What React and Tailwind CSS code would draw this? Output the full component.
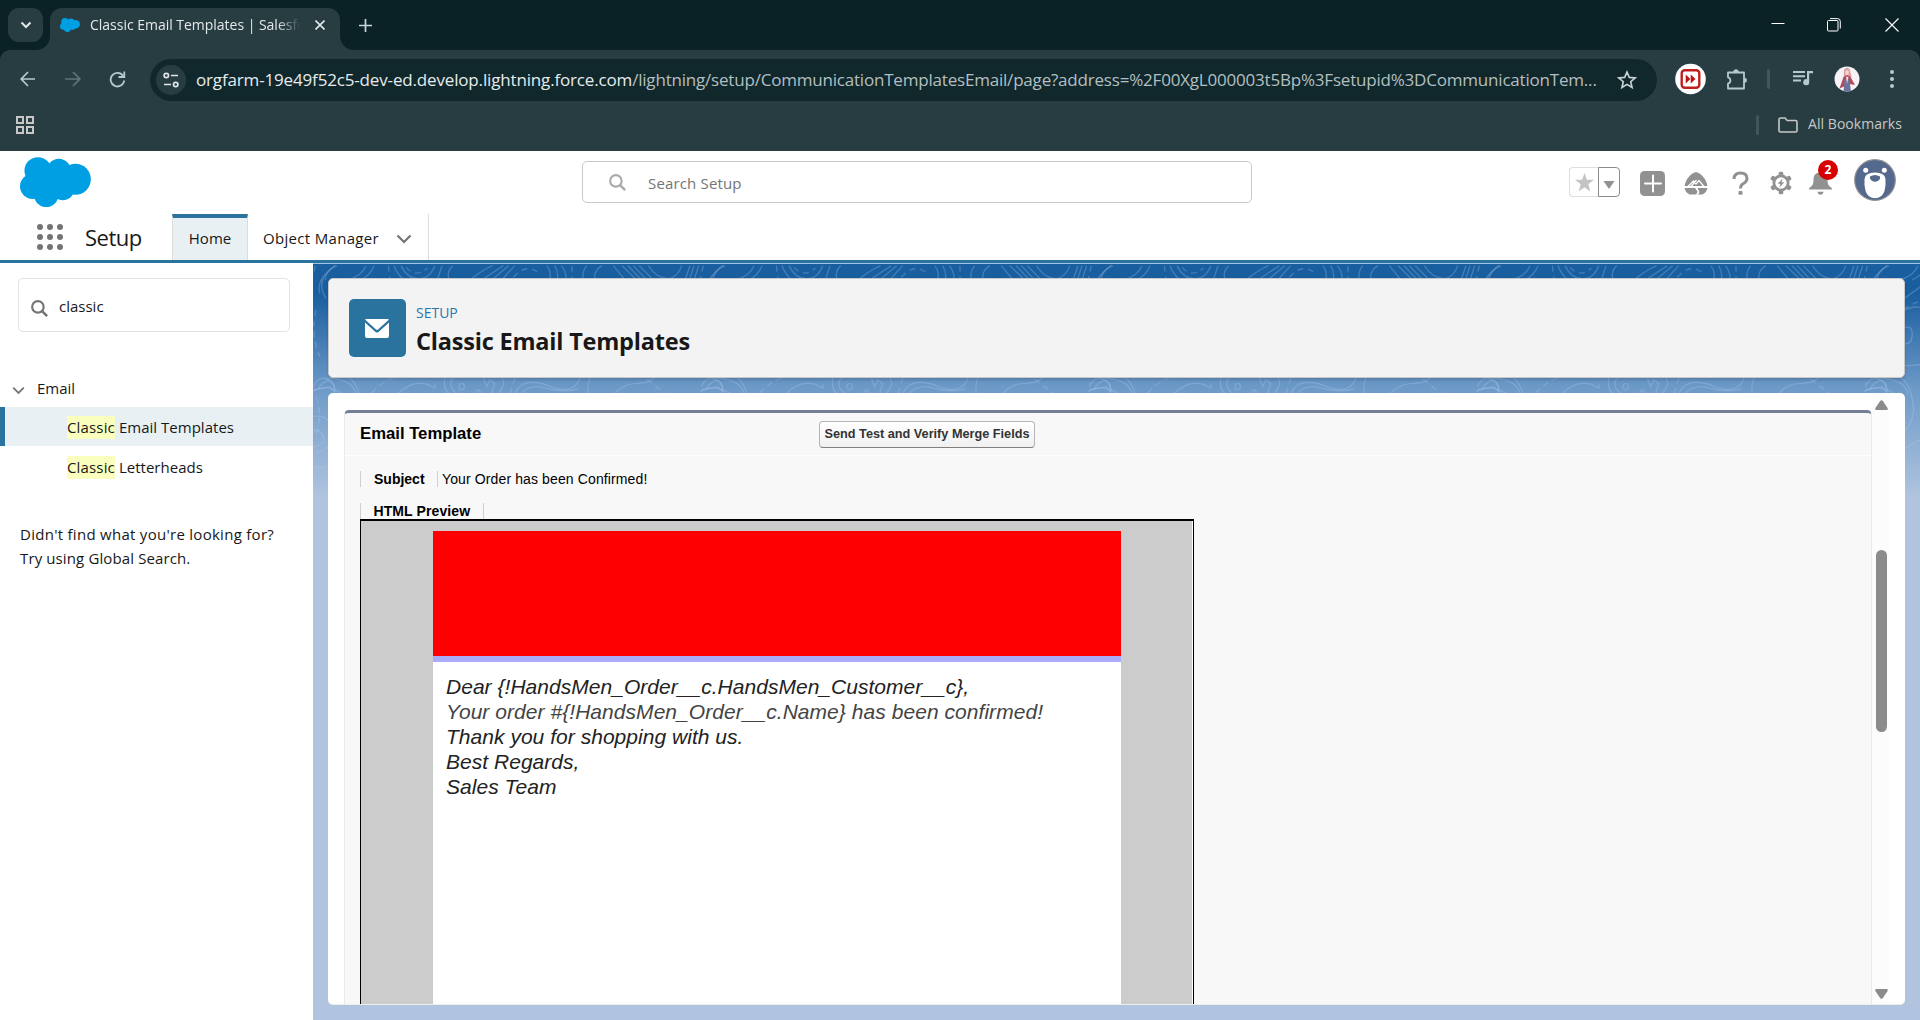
import React from "react";

const ui = "font-['Open_Sans','Noto_Sans',sans-serif]";
const arial = "font-['Liberation_Sans',Arial,sans-serif]";

function Cloud({ className }) {
  return (
    <svg viewBox="60 36 214 150" className={className} fill="#009fe3" preserveAspectRatio="none">
      <circle cx="114" cy="77" r="40.500" />
      <circle cx="177" cy="77" r="36" />
      <circle cx="227" cy="103" r="46.500" />
      <circle cx="98" cy="124" r="38" />
      <circle cx="139" cy="149" r="37" />
      <circle cx="189" cy="130" r="35.500" />
      <path d="M90 70L215 70L220 140L100 150Z" />
    </svg>
  );
}

function Chevron({ className, width = 2.2 }) {
  return (
    <svg viewBox="0 0 16 10" className={className} fill="none" stroke="currentColor" strokeWidth={width}>
      <path d="M1.500 1.500L8 8L14.500 1.500" />
    </svg>
  );
}

function Magnifier({ className }) {
  return (
    <svg viewBox="0 0 16 16" className={className} fill="none" stroke="currentColor" strokeWidth="2">
      <circle cx="6.500" cy="6.500" r="5.400" />
      <path d="M10.400 10.400L15.200 15.200" strokeWidth="2.400" />
    </svg>
  );
}

function TitleBar() {
  return (
    <div className="flex h-[50px] items-stretch bg-[#0a2226] text-[#e3e8e9]">
      <div className="ml-2 mt-2 flex h-[34px] w-[35px] items-center justify-center rounded-[11px] bg-[#283d42]">
        <svg viewBox="0 0 12 8" className="h-2 w-3" fill="none" stroke="currentColor" strokeWidth="2">
          <path d="M1.500 1.500L6 6L10.500 1.500" />
        </svg>
      </div>
      <div className="relative ml-[7px] mt-[7.500px] flex w-[290px] items-center rounded-t-[12px] bg-[#283d42] pb-[7px]">
        <svg className="absolute -left-[14px] bottom-0 h-[14px] w-[14px]" viewBox="0 0 14 14"><path d="M14 0V14H0A14 14 0 0 0 14 0Z" fill="#283d42" /></svg>
        <svg className="absolute -right-[14px] bottom-0 h-[14px] w-[14px]" viewBox="0 0 14 14"><path d="M0 0V14H14A14 14 0 0 1 0 0Z" fill="#283d42" /></svg>
        <Cloud className="ml-[10px] h-[14px] w-5 shrink-0" />
        <div className={`ml-[10px] w-[210px] overflow-hidden whitespace-nowrap text-[14px] leading-5 tracking-[-0.020px] mask-[linear-gradient(to_right,#000_188px,transparent_210px)] ${ui}`}>
          Classic Email Templates | Salesfo
        </div>
        <svg viewBox="0 0 10 10" className="ml-[15px] h-[10px] w-[10px] shrink-0" stroke="currentColor" strokeWidth="1.600"><path d="M0.500 0.500L9.500 9.500M9.500 0.500L0.500 9.500" /></svg>
      </div>
      <svg viewBox="0 0 13 13" className="ml-[19px] mt-[19px] h-[13px] w-[13px]" stroke="#c8d6da" strokeWidth="1.700"><path d="M6.500 0V13M0 6.500H13" /></svg>
      <div className="ml-auto mr-[21px] flex items-center text-white">
        <svg viewBox="0 0 14 14" className="h-[14px] w-[14px]" stroke="currentColor"><path d="M0.500 5.500H13.500" /></svg>
        <svg viewBox="0 0 14 14" className="ml-[42px] h-[14px] w-[14px]" fill="none" stroke="currentColor"><rect x="0.500" y="2.500" width="10.500" height="10.500" rx="1" /><path d="M3 0.600H10.500Q13.300 0.600 13.300 3.400V10.500" /></svg>
        <svg viewBox="0 0 14 14" className="ml-[44px] h-[14px] w-[14px]" stroke="currentColor" strokeWidth="1.100"><path d="M0.500 0.500L13.500 13.500M13.500 0.500L0.500 13.500" /></svg>
      </div>
    </div>
  );
}

function Toolbar() {
  return (
    <div className="bg-[#0a2226]">
      <div className="h-[101px] rounded-t-[10px] bg-[#283d42]">
        <div className="flex h-[58px] items-center text-[#b5cad0]">
          <svg viewBox="0 0 16 16" className="ml-5 h-4 w-4" fill="none" stroke="currentColor" strokeWidth="1.700"><path d="M15 8H1.500M8 1L1.200 8L8 15" /></svg>
          <svg viewBox="0 0 16 16" className="ml-[29px] h-4 w-4 text-[#617479]" fill="none" stroke="currentColor" strokeWidth="1.700"><path d="M0 8H14.500M8 1L14.800 8L8 15" /></svg>
          <svg viewBox="0 0 17 17" className="ml-[28px] h-[17px] w-[17px]" fill="none" stroke="currentColor" strokeWidth="1.800"><path d="M14 4.700A6.800 6.800 0 1 0 15.200 9.500M15.300 0.500V6H9.500" /></svg>
          <div className="ml-6 mt-px flex h-[42px] w-[1507px] items-center rounded-full bg-[#10282c]">
            <div className="ml-[6px] flex h-[30px] w-[30px] items-center justify-center rounded-full bg-[#283d42]">
              <svg viewBox="0 0 16 16" className="h-4 w-4" fill="none" stroke="#dfe6e8" strokeWidth="1.700"><circle cx="3.300" cy="3.500" r="2.200" /><path d="M8 3.500H15M1 12.500H8" /><circle cx="12.700" cy="12.500" r="2.200" /></svg>
            </div>
            <div className={`ml-[10px] w-[1412px] whitespace-nowrap text-[17px] leading-6 text-[#b3bfc1] ${ui}`}>
              <span className="tracking-[-0.160px] text-[#e6ebec]">orgfarm-19e49f52c5-dev-ed.develop.lightning.force.com</span>
              <span className="tracking-[-0.200px]">/lightning/setup/CommunicationTemplatesEmail/page?address=%2F00XgL000003t5Bp%3Fsetupid%3DCommunicationTem...</span>
            </div>
            <svg viewBox="0 0 20 20" className="ml-[9px] h-5 w-5" fill="none" stroke="#c9d3d5" strokeWidth="1.600"><path d="M10 2L12.300 7.400L18.200 7.900L13.700 11.700L15.100 17.500L10 14.400L4.900 17.500L6.300 11.700L1.800 7.900L7.700 7.400Z" /></svg>
          </div>
          <svg viewBox="0 0 32 32" className="ml-[18px] h-8 w-8">
            <circle cx="15.500" cy="16" r="15.300" fill="#fff" />
            <rect x="6.700" y="7.200" width="17.600" height="17.600" rx="3" fill="#fff" stroke="#c11f1f" strokeWidth="2.400" />
            <path d="M10.700 11.500L15.300 16L10.700 20.500ZM15.700 11.500L20.500 16L15.700 20.500Z" fill="#b91515" />
          </svg>
          <svg viewBox="0 0 21 21" className="ml-[19px] h-[21px] w-[21px]" fill="none" stroke="#b5cad0" strokeWidth="1.800">
            <path d="M2 3.500H18V19.500H2V14.500A3.200 3.200 0 0 0 2 8.300Z" strokeLinejoin="round" />
            <path d="M7.500 3A2.500 2.500 0 0 1 12.500 3ZM18.500 9A2.300 2.300 0 0 1 18.500 13.600Z" fill="#b5cad0" strokeWidth="0.500" />
          </svg>
          <div className="ml-5 h-5 w-[3px] rounded bg-[#40565c]" />
          <svg viewBox="0 0 20 16" className="mb-[2px] ml-[23px] h-4 w-5" fill="currentColor"><path d="M0 1H12V3H0ZM0 5.300H12V7.300H0ZM0 9.600H8V11.600H0ZM14 1H20V3.200H16.200V12A3 3 0 1 1 14 9.300Z" /></svg>
          <svg viewBox="0 0 26 26" className="ml-[21px] h-[26px] w-[26px]">
            <defs><clipPath id="profile"><circle cx="13" cy="13" r="12.500" /></clipPath></defs>
            <g clipPath="url(#profile)">
              <rect width="26" height="26" fill="#f5f3f5" />
              <path d="M10 4Q12.500 0 15.500 3L17.500 10L16 17H9.500Z" fill="#dba0a6" />
              <path d="M11.500 5Q13 3.500 14.700 5V8Q13 10 11.500 8Z" fill="#f7d9d2" />
              <path d="M9.500 11L13 9L16.500 11L21 19L15.500 18L5.500 22.500Z" fill="#b04a5c" />
              <path d="M10.500 14L13 12L15.500 14L17 26H9.500Z" fill="#6b739b" />
              <path d="M12 10.500L14.500 11L13 18Z" fill="#efd9dc" />
            </g>
          </svg>
          <svg viewBox="0 0 4 18" className="ml-[30px] h-[18px] w-1" fill="currentColor"><circle cx="2" cy="2" r="2" /><circle cx="2" cy="9" r="2" /><circle cx="2" cy="16" r="2" /></svg>
        </div>
        <div className="flex h-[34px] items-center pb-px text-[#c7c7c7]">
          <svg viewBox="0 0 18 18" className="ml-4 h-[18px] w-[18px]" fill="none" stroke="currentColor" strokeWidth="2"><path d="M1 1H7V7H1ZM11 1H17V7H11ZM1 11H7V17H1ZM11 11H17V17H11Z" /></svg>
          <div className="ml-auto h-5 w-[3px] rounded bg-[#40565c]" />
          <svg viewBox="0 0 20 16" className="ml-[19px] h-4 w-5" fill="none" stroke="currentColor" strokeWidth="1.600"><path d="M1 2.500Q1 1 2.500 1H7L9.200 3.500H17.500Q19 3.500 19 5V13.500Q19 15 17.500 15H2.500Q1 15 1 13.500Z" /></svg>
          <span className={`mb-px ml-[10px] mr-[18px] text-[14px] leading-5 tracking-[0.050px] ${ui}`}>All Bookmarks</span>
        </div>
      </div>
    </div>
  );
}

function HeaderActions() {
  return (
    <div className="flex items-center text-[#919191]">
      <div className="mb-[2px] flex h-[30px] w-[51px]">
        <div className="flex w-[29px] items-center justify-center rounded-l-[4px] border border-r-0 border-[#dedede]">
          <svg viewBox="0 0 20 20" className="h-[19px] w-[19px]" fill="#c4c4c4"><path d="M10 0L12.500 7.200H20L14 11.800L16.200 19.500L10 15L3.800 19.500L6 11.800L0 7.200H7.500Z" /></svg>
        </div>
        <div className="flex w-[22px] items-center justify-center rounded-r-[4px] border border-[#8a8a8a]">
          <svg viewBox="0 0 12 8" className="mt-[6px] h-2 w-3" fill="currentColor"><path d="M0.500 0H11.500L6 8Z" /></svg>
        </div>
      </div>
      <svg viewBox="0 0 25 25" className="ml-5 h-[25px] w-[25px]"><rect width="25" height="25" rx="4.500" fill="currentColor" /><path d="M13 4.500V20.500M5 12.500H21" stroke="#fff" strokeWidth="2" strokeLinecap="round" /></svg>
      <svg viewBox="0 0 24 23" className="ml-[19px] h-[23px] w-6">
        <path d="M0.500 14Q2 6 8.500 1.500Q12-0.800 15.500 1.500Q22 6 23.500 14Z" fill="currentColor" />
        <path d="M0.500 16H23.500Q22.500 20.500 18.500 22.500H5.500Q1.500 20.500 0.500 16Z" fill="currentColor" />
        <path d="M4 14.500L9.500 9L12 12L15 8.500L20 14.500M7 14.500L12.500 8" fill="none" stroke="#fff" strokeWidth="1.300" />
        <path d="M12 15.500Q10.500 17 13 18.500Q14.500 20 11.500 22.800H13.500Q16.500 20.500 14.500 18Q13 17 14 15.500Z" fill="#fff" />
      </svg>
      <svg viewBox="0 0 17 24" className="ml-[24px] h-6 w-[17px]"><path d="M2 8Q2 2 8.500 2Q15 2 15 7.500Q15 10.500 11.500 12.500Q8.500 14 8.500 17.500" fill="none" stroke="currentColor" strokeWidth="3" /><rect x="6.500" y="20" width="4" height="3.700" rx="1" fill="currentColor" /></svg>
      <svg viewBox="0 0 22 24" className="ml-[21px] h-6 w-[22px]">
        <g fill="currentColor"><circle cx="11" cy="12" r="8.500" />
          {[0, 60, 120, 180, 240, 300].map((a) => <rect key={a} x="8.700" y="0.700" width="4.600" height="6" rx="1.500" transform={`rotate(${a} 11 12)`} />)}
        </g>
        <circle cx="11" cy="12" r="5.700" fill="#fff" />
        <path d="M12.800 7.200L7.700 12.700H10.500L9.300 16.800L14.300 11.300H11.500Z" fill="currentColor" />
      </svg>
      <div className="relative ml-[17px]">
        <svg viewBox="0 0 23 23" className="h-[23px] w-[23px]" fill="currentColor"><path d="M11.500 0.500C6 0.500 4.500 4 4.500 8C4.500 12.500 3 14 0.800 15.500Q0 16.200 0 17.500H23Q23 16.200 22.200 15.500C20 14 18.500 12.500 18.500 8C18.500 4 17 0.500 11.500 0.500ZM8.500 19.800H14.500Q14 22.800 11.500 22.800Q9 22.800 8.500 19.800Z" /></svg>
        <span className={`absolute -top-[12px] left-[9px] flex h-5 w-5 items-center justify-center rounded-full bg-[#d60000] text-[12px] font-bold text-white ${ui}`}>2</span>
      </div>
      <svg viewBox="0 0 42 42" className="mb-[6px] ml-[22px] h-[42px] w-[42px]">
        <circle cx="21" cy="21" r="20.300" fill="#54698d" stroke="#8f8f8f" strokeWidth="1.200" />
        <circle cx="11.700" cy="11.200" r="2.500" fill="#fff" /><circle cx="30.300" cy="11.200" r="2.500" fill="#fff" />
        <path d="M10.500 20Q11 13.500 21 13.500Q31 13.500 31.500 20Q32 26 30.500 32Q28 39.300 21 39.300Q14 39.300 11.500 32Q10 26 10.500 20Z" fill="#fff" />
        <path d="M16 17.500Q21 14.500 26 17.500Q26.500 20.500 24 21.800Q21 23.500 18 21.800Q15.500 20.500 16 17.500Z" fill="#54698d" />
      </svg>
    </div>
  );
}

function GlobalHeader() {
  return (
    <header className={`flex h-[112px] flex-col border-b-[3px] border-[#2a739e] bg-white text-[#181818] ${ui}`}>
      <div className="flex h-[63px] items-start">
        <Cloud className="ml-5 mt-[6px] h-[50px] w-[71px]" />
        <div className="ml-[491px] mt-[10px] flex h-[42px] w-[670px] items-center rounded-[5px] border border-[#c9c9c9] text-[#747474]">
          <Magnifier className="ml-[26px] h-[17px] w-[17px] text-[#aaaaaa]" />
          <span className="ml-[22px] pt-[2px] text-[15px] leading-5 tracking-[0.160px]">Search Setup</span>
        </div>
        <div className="ml-auto mr-6 mt-[8px]"><HeaderActions /></div>
      </div>
      <nav className="flex h-[46px] items-stretch">
        <svg viewBox="0 0 26 26" className="ml-[37px] mt-[10px] h-[26px] w-[26px]" fill="#747474">
          {[3, 13, 23].map((y) => [3, 13, 23].map((x) => <circle key={`${x}-${y}`} cx={x} cy={y} r="3" />))}
        </svg>
        <span className="ml-[22px] w-[87px] pt-[8px] text-[22px] leading-[30px] tracking-[-0.500px]">Setup</span>
        <div className="w-[76px] border-x border-t-4 border-x-[#dddddd] border-t-[#2a739e] bg-[#e8f0f4] pt-[8px] text-center text-[15px] leading-[24px]">Home</div>
        <div className="flex w-[181px] items-center border-r border-[#dddddd] pl-[15px]">
          <span className="pt-[2px] text-[15px] leading-5 tracking-[0.320px]">Object Manager</span>
          <Chevron className="ml-[17px] mt-[4px] h-[10px] w-4 text-[#747474]" />
        </div>
      </nav>
    </header>
  );
}

const mark = "bg-[#faffbd]";

function Sidebar() {
  return (
    <aside className={`flex w-[313px] shrink-0 flex-col bg-white text-[15px] text-[#181818] ${ui}`}>
      <div className="ml-[18px] mt-[15px] flex h-[54px] w-[272px] shrink-0 items-center rounded-[5px] border border-[#e2e2e2]">
        <Magnifier className="ml-[12px] mt-[6px] h-[17px] w-[17px] text-[#747474]" />
        <span className="ml-[11px] pt-[3px]">classic</span>
      </div>
      <div className="mt-[38px] flex h-[37px] items-center">
        <Chevron className="ml-3 mt-[3px] h-[9px] w-[13px] text-[#747474]" />
        <span className="ml-[12px]">Email</span>
      </div>
      <div className="flex h-[39px] items-center whitespace-pre border-l-[5px] border-[#2a739e] bg-[#e8f0f4] pl-[62px] pt-[2px] tracking-[0.020px]">
        <span className={`${mark} tracking-[0.160px]`}>Classic</span> Email Templates
      </div>
      <div className="mt-px flex h-[39px] items-center whitespace-pre pl-[67px] pt-[2px] tracking-[0.020px]">
        <span className={`${mark} tracking-[0.160px]`}>Classic</span> Letterheads
      </div>
      <div className="ml-5 mt-[36px] leading-6">
        <div className="tracking-[0.280px]">Didn't find what you're looking for?</div>
        <div className="tracking-[0.120px]">Try using Global Search.</div>
      </div>
    </aside>
  );
}

/* Topographic contour lines, one tile repeated across the top of the stage. */
function Contours() {
  const tiles = [-1, 0, 1, 2, 3, 4];
  return (
    <svg className="absolute inset-x-0 top-0 h-[260px] w-[1607px]" viewBox="-21 39 4821 780" fill="none" stroke="#b8d2f2" strokeOpacity="0.280" strokeWidth="4">
      <defs>
        <g id="contour">
          <path d="M80 90Q125 80 138 47M120 90Q150 78 162 47M222 47Q230 70 252 90M243 47Q262 86 295 86Q330 86 344 47M366 47L352 90M398 47Q378 66 388 90M518 47Q490 58 450 90M550 47L485 90M566 47L515 90M584 47L545 90M680 47Q694 62 690 90M704 47Q716 66 712 90M724 47Q740 66 738 90M800 47Q785 66 790 90M845 47Q818 66 826 90M880 47L915 90M906 47L950 90M924 47L965 90M940 47L980 90M958 47L1000 90M985 47Q1010 86 1045 86Q1075 80 1085 47M1110 47L1095 90M1122 47L1108 90M1136 47L1122 90M1215 47Q1180 62 1180 90" />
          <path strokeDasharray="18 14" d="M205 47L210 90M258 52Q290 86 322 54M580 82Q620 36 660 72M756 47V90M1150 47L1140 90M-12 180Q-30 250 0 320M-12 440Q10 500 -14 560M70 200Q110 160 160 150" />
          <path d="M28 60Q-12 100 18 145M46 45Q-14 90 0 130M-20 410Q-10 385 10 385Q40 390 48 425M-20 420L30 410L48 428M-20 500Q30 490 40 550Q40 600 -20 610M-20 540Q10 540 12 570Q0 590 -20 590M-20 650Q20 660 40 630M90 150L160 100M90 185Q130 160 165 180M90 235Q130 220 118 270Q112 285 90 280M90 345Q120 350 160 340M90 385Q120 410 125 480Q120 530 90 550M90 600L160 560" />
          <path d="M235 430Q290 378 345 415M345 400V415M400 384Q380 405 410 430M375 384Q368 410 385 430M425 400a8 10 0 1 0 .1 0M475 420a6 8 0 1 0 .1 0M490 384L500 410L510 390L524 400L515 430M545 384Q560 400 535 430M585 430Q605 380 680 405Q760 440 780 384M605 430Q630 400 680 415Q740 430 775 415M805 430Q800 410 810 384M885 430Q910 400 955 400Q990 398 1002 384M1160 415Q1170 395 1195 390Q1212 405 1205 425M1140 425Q1180 400 1230 430M1180 384Q1260 385 1272 430" />
          <path strokeDasharray="18 14" d="M980 388L1035 430M570 430L585 384M155 430Q180 400 220 384" />
        </g>
      </defs>
      {tiles.map((t) => <use key={t} href="#contour" x={t * 1164} />)}
    </svg>
  );
}

function PageHeader() {
  return (
    <div className={`flex h-[100px] shrink-0 items-start rounded-[5px] border border-[#c9c9c9] bg-[#f3f3f3] shadow-[0_2px_3px_rgba(0,0,0,0.15)] ${ui}`}>
      <div className="ml-5 mt-5 flex h-[58px] w-[57px] items-center justify-center rounded-[5px] bg-[#2a739e]">
        <svg viewBox="0 0 24 19" className="mr-[2px] h-[19px] w-6" fill="#fff"><path d="M0.500 0H23.500V1L13 10.500Q12 11.300 11 10.500L0.500 1Z" /><path d="M0 3.500L10.500 13Q12 14 13.500 13L24 3.500V17Q24 19 22 19H2Q0 19 0 17Z" /></svg>
      </div>
      <div className="ml-[10px] mt-[22px]">
        <div className="text-[14px] leading-6 text-[#2a76a8]">SETUP</div>
        <div className="text-[23.500px] font-bold leading-8 tracking-[-0.200px] text-[#181818]">Classic Email Templates</div>
      </div>
    </div>
  );
}

function EmailPreview() {
  return (
    <div className="ml-[15px] flex w-[834px] flex-1 border-x border-t-2 border-black bg-[#cccccc]">
      <div className="ml-[72px] mt-[10px] flex w-[688px] flex-col bg-white">
        <div className="h-[125px] shrink-0 bg-[#ff0000]" />
        <div className="h-[6px] shrink-0 bg-[#aaaaff]" />
        <div className="ml-[13px] mt-[12px] whitespace-nowrap text-[21px] italic leading-[25px] tracking-[0.030px] text-[#222222]">
          <div>Dear {"{!HandsMen_Order__c.HandsMen_Customer__c},"}</div>
          <div className="tracking-[0.050px] text-[#444444]">Your order {"#{!HandsMen_Order__c.Name}"} has been confirmed!</div>
          <div>Thank you for shopping with us.</div>
          <div>Best Regards,</div>
          <div>Sales Team</div>
        </div>
      </div>
      <div className="ml-auto w-px bg-white" />
    </div>
  );
}

function TemplatePanel() {
  return (
    <div className={`flex w-[1528px] flex-col rounded-t-[5px] border-x border-t-[3px] border-x-[#eaeaea] border-t-[#747e96] bg-[#f8f8f8] text-black ${arial}`}>
      <div className="flex h-[43px] shrink-0 items-start border-b border-white">
        <span className="ml-[15px] mt-[11px] w-[459px] text-[16.700px] font-bold leading-5">Email Template</span>
        <button className="mt-2 h-[27px] w-[216px] whitespace-nowrap rounded-[4px] border border-[#b5b5b5] border-b-[#7f7f7f] bg-linear-to-b from-white to-[#f0f0f0] pt-px text-[12.700px] font-bold text-[#333333]">
          Send Test and Verify Merge Fields
        </button>
      </div>
      <div className="ml-[15px] mt-[15px] flex h-4 shrink-0 text-[14px] leading-4">
        <span className="w-[77px] border-l border-[#d0d0d0] pl-[13px] font-bold">Subject</span>
        <span className="border-l border-[#d0d0d0] pl-1 tracking-[0.120px]">Your Order has been Confirmed!</span>
      </div>
      <div className="ml-[15px] mt-4 flex h-4 shrink-0 text-[14px] leading-4">
        <span className="w-[124px] border-x border-[#d0d0d0] pl-[12.500px] font-bold tracking-[0.100px]">HTML Preview</span>
      </div>
      <EmailPreview />
    </div>
  );
}

function Scrollbar() {
  return (
    <div className="flex w-[17px] flex-col items-center bg-[#fcfcfc] pl-[2px] text-[#8b8b8b]">
      <svg viewBox="0 0 13 10" className="mt-[7px] h-[10px] w-[13px] shrink-0" fill="currentColor"><path d="M5.300 0.800Q6.500-0.500 7.700 0.800L12.600 8Q13.200 10 11.700 10H1.300Q-0.200 10 0.400 8Z" /></svg>
      <div className="mt-[140px] h-[182px] w-[11px] rounded-full bg-[#8b8b8b]" />
      <svg viewBox="0 0 13 10" className="mb-[5px] mt-auto h-[10px] w-[13px] shrink-0" fill="currentColor"><path d="M5.300 9.200Q6.500 10.500 7.700 9.200L12.600 2Q13.200 0 11.700 0H1.300Q-0.200 0 0.400 2Z" /></svg>
    </div>
  );
}

export default function App() {
  return (
    <div className="flex h-[1020px] w-[1920px] flex-col overflow-hidden bg-white">
      <TitleBar />
      <Toolbar />
      <GlobalHeader />
      <div className="flex min-h-0 flex-1">
        <Sidebar />
        <main className="relative flex flex-1 flex-col bg-[linear-gradient(to_bottom,#195e9f_0px,#195e9f_30px,#6f9bc9_128px,#b0c4df_235px,#b0c4df_100%)]">
          <Contours />
          <div className="relative flex min-h-0 flex-1 flex-col gap-[15px] border-t border-[#9ec3e6] pb-[15px] pl-[15px] pr-[15px] pt-[14px]">
            <PageHeader />
            <section className="flex min-h-0 flex-1 overflow-hidden rounded-[5px] border-b border-[#eeeeee] bg-white pl-4">
              <div className="flex pt-[17px]"><TemplatePanel /></div>
              <Scrollbar />
            </section>
          </div>
        </main>
      </div>
    </div>
  );
}
